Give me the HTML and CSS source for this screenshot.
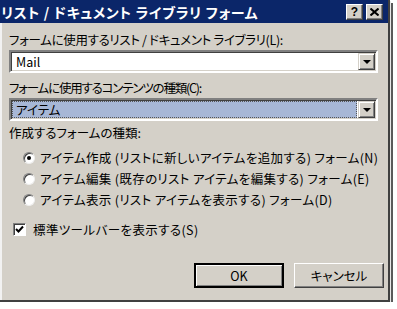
FILE: index.html
```html
<!DOCTYPE html>
<html lang="ja">
<head>
<meta charset="utf-8">
<title>リスト / ドキュメント ライブラリ フォーム</title>
<link rel="stylesheet" href="styles.css">
</head>
<body>
<div class="dialog">
  <div class="titlebar">
    <span class="title">リスト / ドキュメント ライブラリ フォーム</span>
    <div class="caption-buttons">
      <span class="cap-btn help">?</span>
      <span class="cap-btn close">
        <svg width="9" height="8" viewBox="0 0 9 8"><path d="M0.5 0.5 L8.5 7.5 M8.5 0.5 L0.5 7.5" stroke="#000" stroke-width="2"/></svg>
      </span>
    </div>
  </div>
  <div class="content">
    <div class="label l1">フォームに使用するリスト / ドキュメント ライブラリ(L):</div>
    <div class="combo">
      <span class="combo-text">Mail</span>
      <span class="drop"><span class="tri"></span></span>
    </div>
    <div class="label l2">フォームに使用するコンテンツの種類(C):</div>
    <div class="combo">
      <span class="combo-text selected">アイテム</span>
      <span class="drop"><span class="tri"></span></span>
    </div>
    <div class="label l3">作成するフォームの種類:</div>
    <div class="radios">
      <div class="radio-row"><span class="radio checked"></span><span>アイテム作成 (リストに新しいアイテムを追加する) フォーム(N)</span></div>
      <div class="radio-row"><span class="radio"></span><span>アイテム編集 (既存のリスト アイテムを編集する) フォーム(E)</span></div>
      <div class="radio-row"><span class="radio"></span><span>アイテム表示 (リスト アイテムを表示する) フォーム(D)</span></div>
    </div>
    <div class="check-row">
      <span class="checkbox"><svg width="9" height="9" viewBox="0 0 9 9"><path d="M1 4 L3.5 6.5 L8 1.5" fill="none" stroke="#000" stroke-width="2"/></svg></span>
      <span class="check-text">標準ツールバーを表示する(S)</span>
    </div>
    <div class="buttons">
      <span class="btn default">OK</span>
      <span class="btn">キャンセル</span>
    </div>
  </div>
</div>
</body>
</html>
```

FILE: styles.css
```css
html, body {
  margin: 0;
  padding: 0;
  background: #ffffff;
}
body {
  font-family: "Noto Sans CJK JP", "DejaVu Sans", sans-serif;
  font-size: 12.5px;
  font-feature-settings: "palt";
  color: #000;
}
.dialog {
  width: 388px;
  height: 300px;
  background: #d4d0c8;
  border-right: 2px solid #404040;
  border-bottom: 2px solid #404040;
  box-shadow: 1px 1px 0 #e8e8e8, 3px 3px 0 #5a5a5a;
  display: flex;
  flex-direction: column;
}
.titlebar {
  height: 23px;
  background: #0b2669;
  display: flex;
  align-items: center;
  justify-content: space-between;
  padding: 0 5px 0 1px;
  box-sizing: border-box;
  flex: none;
}
.title {
  color: #fff;
  font-weight: bold;
  font-size: 14px;
  letter-spacing: 0.65px;
  white-space: nowrap;
}
.caption-buttons {
  display: flex;
  gap: 3px;
}
.cap-btn {
  width: 17px;
  height: 16px;
  box-sizing: border-box;
  background: #d4d0c8;
  border: 1px solid;
  border-color: #fff #404040 #404040 #fff;
  box-shadow: inset -1px -1px 0 #808080;
  display: flex;
  align-items: center;
  justify-content: center;
  font-family: "Liberation Sans", sans-serif;
  font-weight: bold;
  font-size: 12px;
  line-height: 1;
}
.content {
  flex: 1;
  border-left: 2px solid #f2f2f2;
  padding: 0 8px 0 7px;
  display: flex;
  flex-direction: column;
}
.label {
  height: 16px;
  line-height: 16px;
  white-space: nowrap;
}
.l1 { margin-top: 9px; letter-spacing: -0.33px; }
.l2 { margin-top: 7px; letter-spacing: -1.2px; }
.l3 { margin-top: 4px; }
.combo {
  width: 369px;
  height: 23px;
  box-sizing: border-box;
  background: #fff;
  border: 2px solid;
  border-color: #808080 #fff #fff #808080;
  box-shadow: inset 1px 1px 0 #404040, inset -1px -1px 0 #d4d0c8;
  display: flex;
  align-items: stretch;
  padding: 1px;
  margin-top: 2px;
}
.combo-text {
  flex: 1;
  padding-left: 4px;
  line-height: 17px;
}
.combo-text.selected {
  background: #a7b7d6;
  outline: 1px dotted #555;
  outline-offset: -1px;
  margin-right: 1px;
}
.drop {
  width: 17px;
  box-sizing: border-box;
  background: #d4d0c8;
  border: 1px solid;
  border-color: #d4d0c8 #404040 #404040 #d4d0c8;
  box-shadow: inset 1px 1px 0 #fff, inset -1px -1px 0 #808080;
  display: flex;
  align-items: center;
  justify-content: center;
}
.tri {
  width: 0;
  height: 0;
  border-left: 4px solid transparent;
  border-right: 4px solid transparent;
  border-top: 4px solid #000;
}
.radios {
  margin-top: 6px;
  display: flex;
  flex-direction: column;
}
.radio-row {
  height: 21px;
  display: flex;
  align-items: center;
  gap: 5px;
  padding-left: 14px;
  white-space: nowrap;
  letter-spacing: 0.36px;
}
.radio {
  width: 12px;
  height: 12px;
  box-sizing: border-box;
  border-radius: 50%;
  background: #fff;
  border: 1px solid;
  border-color: #808080 #eee #eee #808080;
  box-shadow: inset 1px 1px 0 #404040;
  display: flex;
  align-items: center;
  justify-content: center;
  flex: none;
}
.radio.checked::after {
  content: "";
  width: 4px;
  height: 4px;
  border-radius: 50%;
  background: #000;
}
.check-row {
  margin-top: 9px;
  height: 21px;
  display: flex;
  align-items: center;
  gap: 7px;
  padding-left: 4px;
}
.check-text {
  letter-spacing: 0.4px;
}
.checkbox {
  width: 13px;
  height: 13px;
  box-sizing: border-box;
  background: #fff;
  border: 1px solid;
  border-color: #808080 #fff #fff #808080;
  box-shadow: inset 1px 1px 0 #404040;
  display: flex;
  align-items: center;
  justify-content: center;
  flex: none;
}
.buttons {
  margin-top: 23px;
  display: flex;
  justify-content: flex-end;
  gap: 10px;
  margin-right: -4px;
}
.btn {
  width: 90px;
  height: 25px;
  box-sizing: border-box;
  border: 1px solid;
  border-color: #fff #404040 #404040 #fff;
  box-shadow: inset -1px -1px 0 #808080;
  display: flex;
  align-items: center;
  justify-content: center;
}
.btn.default {
  border: 2px solid #000;
  box-shadow: inset 1px 1px 0 #fff, inset -1px -1px 0 #808080;
}
```
